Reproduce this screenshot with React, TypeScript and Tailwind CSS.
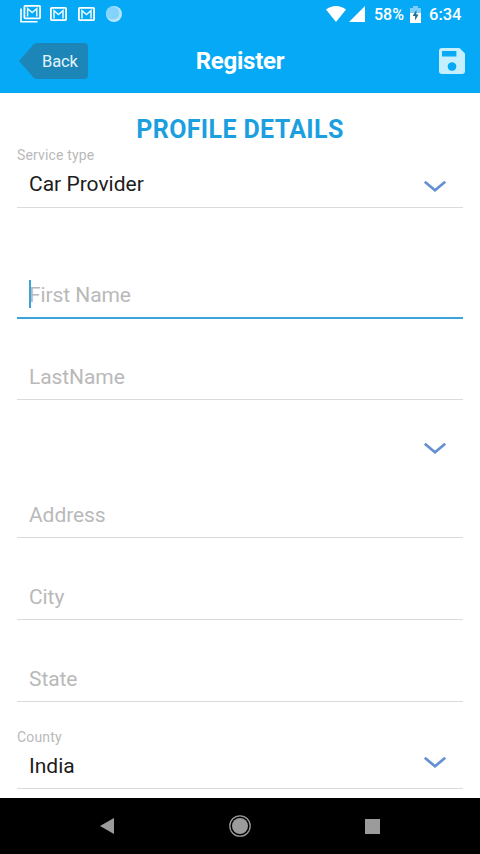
import { ReactNode } from "react";

const MailIcon = () => (
  <svg width="17" height="14" viewBox="0 0 17 14" fill="none">
    <rect x="0.9" y="0.9" width="15.2" height="12.2" rx="0.8" stroke="#fff" strokeWidth="1.8" />
    <path d="M4 11.6V3.6l4.5 4L13 3.6v8" stroke="#e6f7ff" strokeWidth="1.5" />
  </svg>
);

const MailStackIcon = () => (
  <svg width="21" height="18" viewBox="0 0 21 18" fill="none">
    <path d="M1 3.5V16.8H17.5" stroke="#fff" strokeWidth="1.6" />
    <rect x="4.4" y="0.9" width="15.7" height="12.4" rx="0.8" stroke="#fff" strokeWidth="1.8" />
    <path d="M7.6 11.6v-8l4.6 4 4.6-4v8" stroke="#e6f7ff" strokeWidth="1.5" />
  </svg>
);

const StatusBar = () => (
  <div className="flex h-7 items-center pl-5 pr-[18px] text-white">
    <MailStackIcon />
    <div className="ml-[9px]">
      <MailIcon />
    </div>
    <div className="ml-[11px]">
      <MailIcon />
    </div>
    <svg className="ml-[10px]" width="18" height="18" viewBox="0 0 18 18">
      <circle cx="9" cy="9" r="8" fill="#b5e6fd" />
      <circle cx="7.8" cy="8" r="6.6" fill="#83d3fb" />
    </svg>
    <svg className="ml-auto" width="20" height="16" viewBox="0 0 20 16" fill="#fff">
      <path d="M0 3.6C5.6-1.2 14.4-1.2 20 3.6L10 16z" />
    </svg>
    <svg className="ml-[3px]" width="16" height="16" viewBox="0 0 16 16" fill="#fff">
      <path d="M16 0v16H0z" />
    </svg>
    <span className="ml-[9px] w-[32px] whitespace-nowrap pt-[2px] text-[16px] font-medium leading-7">
      58%
    </span>
    <svg className="ml-[4px]" width="11" height="17" viewBox="0 0 11 17">
      <path d="M3 0h5v2h3v5H0V2h3z" fill="#7bd0fb" />
      <path d="M0 7h11v10H0z" fill="#fff" />
      <path d="M6.4 4L2.6 10h2.5v4.5L8.6 8.4H6.4z" fill="#24718f" />
    </svg>
    <span className="ml-[8px] w-[33px] whitespace-nowrap pt-[2px] text-[16.5px] font-medium leading-7">
      6:34
    </span>
  </div>
);

const BackButton = () => (
  <button className="relative h-[36px] w-[69px]">
    <svg className="absolute inset-0" width="69" height="36" viewBox="0 0 69 36">
      <path
        d="M0 18L14.5 1.5Q16 0 18 0H65Q69 0 69 4V32Q69 36 65 36H18Q16 36 14.5 34.5z"
        fill="#1c86b8"
      />
    </svg>
    <span className="relative block pt-px pl-[23px] text-left text-[16.5px] leading-[35px] tracking-[-0.1px] text-[#e2f5fd]">
      Back
    </span>
  </button>
);

const Header = () => (
  <header className="h-[93px] bg-[#05a9f6]">
    <StatusBar />
    <div className="grid grid-cols-3 items-center pt-[15px] pl-[19px] pr-[15px]">
      <BackButton />
      <h1 className="-ml-[4px] pt-px text-center text-[24px] font-bold leading-[35px] tracking-[-0.25px] text-white">
        Register
      </h1>
      <svg className="-mt-px ml-auto" width="26" height="26" viewBox="0 0 26 26">
        <path
          fillRule="evenodd"
          fill="#c5effe"
          d="M3 0H20.5L26 5.5V23Q26 26 23 26H3Q0 26 0 23V3Q0 0 3 0zM3 3V8.6H17.4V3zM13 14.2a4.3 4.3 0 1 0 .01 0z"
        />
      </svg>
    </div>
  </header>
);

const Chevron = () => (
  <svg width="24" height="13" viewBox="0 0 24 13" fill="none">
    <path d="M1.8 1.8L12 10.3 22.2 1.8" stroke="#6390d2" strokeWidth="2.7" />
  </svg>
);

const Line = ({ className, children }: { className: string; children: ReactNode }) => (
  <div className={`flex flex-col justify-end ${className}`}>{children}</div>
);

const Field = ({ label, className }: { label: string; className: string }) => (
  <Line className={`border-b border-[#dadada] ${className}`}>
    <span className="pb-[7px] pl-3 text-[21px] leading-[30px] tracking-[-0.08px] text-[#b9b9b9]">
      {label}
    </span>
  </Line>
);

const Select = ({
  label,
  value,
  className,
  valueClass,
  iconClass,
}: {
  label: string;
  value: string;
  className: string;
  valueClass: string;
  iconClass: string;
}) => (
  <Line className={`border-b border-[#dadada] ${className}`}>
    <span className="text-[14px] leading-4 tracking-[0.15px] text-[#b9b9b9]">{label}</span>
    <div className="flex items-end justify-between pt-[6px] pl-3 pr-4">
      <span className={`text-[21px] leading-[30px] text-[#1c1c1c] ${valueClass}`}>{value}</span>
      <div className={iconClass}>
        <Chevron />
      </div>
    </div>
  </Line>
);

export default function App() {
  return (
    <div className="flex h-[854px] w-[480px] flex-col overflow-hidden bg-white font-['Roboto',sans-serif]">
      <Header />
      <main className="flex flex-1 flex-col px-[17px]">
        <h2 className="h-[54px] pt-[21px] text-center text-[25px] font-bold leading-8 tracking-[0.36px] text-[#1c9fdf]">
          PROFILE DETAILS
        </h2>
        <Select
          label="Service type"
          value="Car Provider"
          className="h-[61px]"
          valueClass="pb-[8px]"
          iconClass="pb-[14px]"
        />
        <Line className="h-[111px] border-b-2 border-[#3ba3d9]">
          <div className="relative pb-[7px] pl-3 text-[21px] leading-[30px] tracking-[-0.08px] text-[#b9b9b9]">
            First Name
            <span className="absolute left-[11.5px] top-0 h-[28px] w-[2px] bg-[#3ba3d9]" />
          </div>
        </Line>
        <Field label="LastName" className="h-[81px]" />
        <div className="flex h-[56px] items-end justify-end pb-px pr-4">
          <Chevron />
        </div>
        <Field label="Address" className="h-[82px]" />
        <Field label="City" className="h-[82px]" />
        <Field label="State" className="h-[82px]" />
        <Select
          label="County"
          value="India"
          className="h-[87px]"
          valueClass="pb-[7px]"
          iconClass="pb-[19px]"
        />
      </main>
      <nav className="flex h-[56px] items-center justify-between bg-black px-[100px]">
        <svg width="14" height="16" viewBox="0 0 14 16">
          <path d="M14 0v16L0 8z" fill="#9b9b9b" />
        </svg>
        <svg width="22" height="22" viewBox="0 0 22 22">
          <circle cx="11" cy="11" r="10.2" fill="none" stroke="#9b9b9b" strokeWidth="1.3" />
          <circle cx="11" cy="11" r="8" fill="#9b9b9b" />
        </svg>
        <div className="h-[15px] w-[15px] bg-[#9b9b9b]" />
      </nav>
    </div>
  );
}
